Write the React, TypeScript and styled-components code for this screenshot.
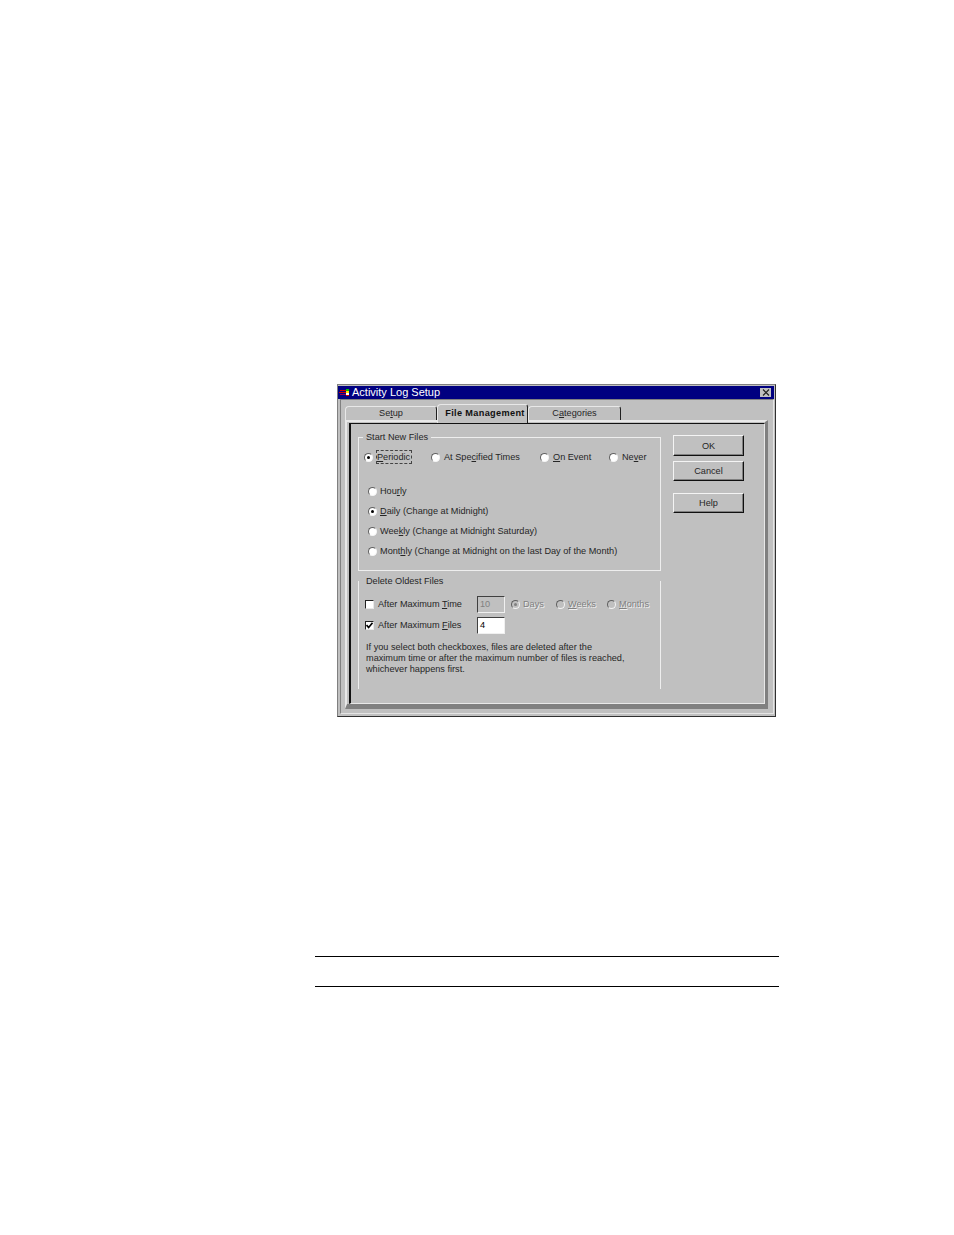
import React from 'react';
import styled, { createGlobalStyle, css } from 'styled-components';

const GlobalStyle = createGlobalStyle`
  html, body {
    margin: 0;
    padding: 0;
    background: #ffffff;
  }
  * {
    box-sizing: border-box;
  }
`;

const Page = styled.div`
  padding-top: 384px;
  height: 1235px;
  overflow: hidden;
  font-family: 'Liberation Sans', Arial, sans-serif;
  font-size: 9.17px;
  line-height: 14px;
  color: #262626;
`;

const Dialog = styled.div`
  display: flex;
  flex-direction: column;
  width: 439px;
  height: 333px;
  margin-left: 337px;
  padding: 1px 1px 1px 0;
  background: #c0c0c0;
  border: 1px solid #808080;
  border-right-color: #303030;
  border-bottom-color: #303030;
`;

const TitleBar = styled.div`
  display: flex;
  align-items: center;
  height: 13px;
  padding: 0 3px 0 1px;
  background: #000080;
  color: #ffffff;
  font-size: 11px;
  line-height: 13px;
`;

const TitleText = styled.span`
  flex: 1;
  margin-left: 2px;
`;

const CloseButton = styled.div`
  display: flex;
  align-items: center;
  justify-content: center;
  width: 11px;
  height: 9px;
  background: #c0c0c0;
`;

const ClientArea = styled.div`
  flex: 1;
  display: flex;
  flex-direction: column;
  margin: 0 0 1px 2px;
  padding: 4px 5px 4px 4px;
  border: 1px solid;
  border-color: #808080 #e4e4e4 #e4e4e4 #808080;
`;

const TabRow = styled.div`
  display: flex;
  align-items: flex-end;
  height: 16px;
  position: relative;
  z-index: 1;
`;

const Tab = styled.div<{ $width: number; $active?: boolean }>`
  width: ${(p) => p.$width}px;
  text-align: center;
  border: 1px solid #e8e8e8;
  border-right: 1px solid #202020;
  border-bottom: none;
  border-radius: 4px 3px 0 0;
  background: #c0c0c0;
  ${(p) =>
    p.$active
      ? css`
          height: 19px;
          margin-bottom: -3px;
          padding: 1px 0 0 5px;
          font-weight: 700;
          letter-spacing: 0.35px;
          color: #111111;
        `
      : css`
          height: 14px;
          line-height: 12px;
        `}
`;

const Panel = styled.div`
  flex: 1;
  display: flex;
  padding: 1px 0 0 2px;
  border-style: solid;
  border-width: 2px 3px 5px 2px;
  border-color: #e8e8e8 #808080 #808080 #e8e8e8;
`;

const PanelInner = styled.div`
  flex: 1;
  display: flex;
  gap: 12px;
  padding: 11px 0 0 7px;
  border-style: solid;
  border-width: 1px 1px 1px 2px;
  border-color: #111111 #e8e8e8 #e8e8e8 #111111;
`;

const Groups = styled.div`
  display: flex;
  flex-direction: column;
  gap: 10px;
  width: 303px;
  margin-top: 2px;
`;

const GroupBox = styled.div<{ $height: number; $open?: boolean }>`
  position: relative;
  height: ${(p) => p.$height}px;
  border: 1px solid #eeeeee;
  ${(p) =>
    p.$open
      ? css`
          border-top: none;
          border-bottom: none;
          padding: 15px 0 0 6px;
        `
      : css`
          padding: 12px 0 0 5px;
        `}
`;

const Legend = styled.span<{ $top: number }>`
  position: absolute;
  top: ${(p) => p.$top}px;
  left: 4px;
  padding: 0 3px;
  background: #c0c0c0;
`;

const RadioRow = styled.div`
  display: flex;
  height: 14px;
  & > label {
    gap: 4px;
  }
`;

const RadioStack = styled.div`
  display: flex;
  flex-direction: column;
  gap: 6px;
  margin: 20px 0 0 4px;
`;

const Option = styled.label<{ $width?: number; $disabled?: boolean }>`
  display: flex;
  align-items: center;
  gap: 3px;
  flex: none;
  height: 14px;
  ${(p) => p.$width && `width: ${p.$width}px;`}
  ${(p) =>
    p.$disabled &&
    css`
      padding-bottom: 1px;
      color: #808080;
      text-shadow: 1px 1px 0 #f0f0f0;
    `}
`;

const RadioMark = styled.span<{ $on?: boolean; $disabled?: boolean }>`
  position: relative;
  flex: none;
  width: 9px;
  height: 9px;
  border-radius: 50%;
  border: 1px solid;
  border-color: #606060 #f4f4f4 #f4f4f4 #606060;
  background: ${(p) => (p.$disabled ? '#c0c0c0' : '#ffffff')};
  ${(p) =>
    p.$on &&
    css`
      &::after {
        content: '';
        position: absolute;
        top: 2px;
        left: 2px;
        width: 3px;
        height: 3px;
        border-radius: 50%;
        background: ${p.$disabled ? '#808080' : '#000000'};
      }
    `}
`;

const Focus = styled.span`
  display: block;
  margin-left: -1px;
  padding: 0 1px 0 0;
  border: 1px dashed #444444;
  line-height: 12px;
`;

const FieldRow = styled.div<{ $gap: number }>`
  display: flex;
  align-items: center;
  height: 17px;
  margin-bottom: ${(p) => p.$gap}px;
`;

const Check = styled.label`
  display: flex;
  align-items: center;
  gap: 4px;
  width: 112px;
  flex: none;
  padding-bottom: 2px;
`;

const CheckMark = styled.span`
  display: flex;
  flex: none;
  width: 9px;
  height: 9px;
  margin-top: 2px;
  background: #ffffff;
  border: 1px solid;
  border-color: #202020 #e8e8e8 #e8e8e8 #202020;
`;

const NumberBox = styled.div<{ $disabled?: boolean }>`
  width: 28px;
  height: 17px;
  margin-right: 6px;
  padding-left: 2px;
  line-height: 15px;
  border: 1px solid;
  border-color: #404040 #f0f0f0 #f0f0f0 #404040;
  background: ${(p) => (p.$disabled ? '#c0c0c0' : '#ffffff')};
  color: ${(p) => (p.$disabled ? '#808080' : '#000000')};
`;

const Note = styled.p`
  margin: 0;
  padding-left: 1px;
  width: 280px;
  line-height: 11px;
`;

const Buttons = styled.div`
  display: flex;
  flex-direction: column;
  width: 71px;
`;

const DialogButton = styled.button<{ $height: number; $gap?: number }>`
  height: ${(p) => p.$height}px;
  margin-bottom: ${(p) => p.$gap ?? 0}px;
  padding: 0;
  font: inherit;
  color: inherit;
  background: #c0c0c0;
  border: 1px solid;
  border-color: #f4f4f4 #101010 #101010 #f4f4f4;
  box-shadow: inset -1px -1px 0 #808080;
`;

const Rules = styled.div`
  width: 464px;
  height: 31px;
  margin: 239px 0 0 315px;
  border-top: 1px solid #000000;
  border-bottom: 1px solid #000000;
`;

const AppIcon = () => (
  <svg width="11" height="8" viewBox="0 0 11 8">
    <rect x="1" y="1" width="6" height="1" fill="#d00000" />
    <rect x="0" y="3" width="7" height="1" fill="#d00000" />
    <rect x="1" y="5" width="6" height="1" fill="#900050" />
    <rect x="7" y="0" width="3" height="2" fill="#00c000" />
    <rect x="7" y="2" width="3" height="2" fill="#ffe000" />
    <rect x="7" y="4" width="3" height="2" fill="#ffffff" />
    <rect x="7" y="6" width="3" height="1" fill="#d00000" />
  </svg>
);

const CloseIcon = () => (
  <svg width="8" height="7" viewBox="0 0 8 7">
    <path d="M1 0.5 L7 6.5 M7 0.5 L1 6.5" stroke="#202020" strokeWidth="1.1" />
  </svg>
);

const TickIcon = () => (
  <svg width="7" height="7" viewBox="0 0 7 7">
    <path d="M0.5 3 L2.6 5.4 L6.5 0.8" fill="none" stroke="#000000" strokeWidth="1.6" />
  </svg>
);

export default function App() {
  return (
    <Page>
      <GlobalStyle />
      <Dialog>
        <TitleBar>
          <AppIcon />
          <TitleText>Activity Log Setup</TitleText>
          <CloseButton>
            <CloseIcon />
          </CloseButton>
        </TitleBar>
        <ClientArea>
          <TabRow>
            <Tab $width={92}>
              Se<u>t</u>up
            </Tab>
            <Tab $width={91} $active>
              File Management
            </Tab>
            <Tab $width={93}>
              C<u>a</u>tegories
            </Tab>
          </TabRow>
          <Panel>
            <PanelInner>
              <Groups>
                <GroupBox $height={134}>
                  <Legend $top={-8}>Start New Files</Legend>
                  <RadioRow>
                    <Option $width={67}>
                      <RadioMark $on />
                      <Focus>
                        <u>P</u>eriodic
                      </Focus>
                    </Option>
                    <Option $width={109}>
                      <RadioMark />
                      <span>
                        At Spe<u>c</u>ified Times
                      </span>
                    </Option>
                    <Option $width={69}>
                      <RadioMark />
                      <span>
                        <u>O</u>n Event
                      </span>
                    </Option>
                    <Option>
                      <RadioMark />
                      <span>
                        Ne<u>v</u>er
                      </span>
                    </Option>
                  </RadioRow>
                  <RadioStack>
                    <Option>
                      <RadioMark />
                      <span>
                        Hou<u>r</u>ly
                      </span>
                    </Option>
                    <Option>
                      <RadioMark $on />
                      <span>
                        <u>D</u>aily (Change at Midnight)
                      </span>
                    </Option>
                    <Option>
                      <RadioMark />
                      <span>
                        Wee<u>k</u>ly (Change at Midnight Saturday)
                      </span>
                    </Option>
                    <Option>
                      <RadioMark />
                      <span>
                        Mont<u>h</u>ly (Change at Midnight on the last Day of the Month)
                      </span>
                    </Option>
                  </RadioStack>
                </GroupBox>
                <GroupBox $height={108} $open>
                  <Legend $top={-7}>Delete Oldest Files</Legend>
                  <FieldRow $gap={4}>
                    <Check>
                      <CheckMark />
                      <span>
                        After Maximum <u>T</u>ime
                      </span>
                    </Check>
                    <NumberBox $disabled>10</NumberBox>
                    <Option $width={45} $disabled>
                      <RadioMark $on $disabled />
                      <span>Days</span>
                    </Option>
                    <Option $width={51} $disabled>
                      <RadioMark $disabled />
                      <span>
                        <u>W</u>eeks
                      </span>
                    </Option>
                    <Option $disabled>
                      <RadioMark $disabled />
                      <span>
                        <u>M</u>onths
                      </span>
                    </Option>
                  </FieldRow>
                  <FieldRow $gap={8}>
                    <Check>
                      <CheckMark>
                        <TickIcon />
                      </CheckMark>
                      <span>
                        After Maximum <u>F</u>iles
                      </span>
                    </Check>
                    <NumberBox>4</NumberBox>
                  </FieldRow>
                  <Note>
                    If you select both checkboxes, files are deleted after the
                    <br />
                    maximum time or after the maximum number of files is reached,
                    <br />
                    whichever happens first.
                  </Note>
                </GroupBox>
              </Groups>
              <Buttons>
                <DialogButton $height={21} $gap={5}>
                  OK
                </DialogButton>
                <DialogButton $height={20} $gap={12}>
                  Cancel
                </DialogButton>
                <DialogButton $height={20}>Help</DialogButton>
              </Buttons>
            </PanelInner>
          </Panel>
        </ClientArea>
      </Dialog>
      <Rules />
    </Page>
  );
}
